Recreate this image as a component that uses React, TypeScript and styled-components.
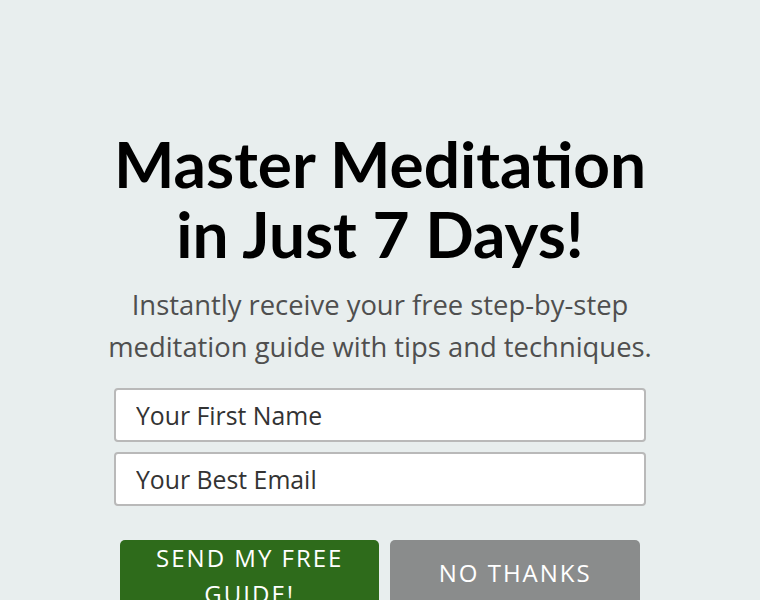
import styled, { createGlobalStyle } from 'styled-components';

var GlobalStyle = createGlobalStyle`
	html, body {
		margin: 0;
		padding: 0;
		background-color: #e8eeee;
	}
	* {
		box-sizing: border-box;
	}
`;

var App = () => {
	return (
		<>
			<GlobalStyle />
			<Page>
				<Wrapper>
					<h1 className='title'>
						Master Meditation
						<br />
						in Just 7 Days!
					</h1>
					<p className='lead'>
						Instantly receive your free step-by-step meditation guide with tips and techniques.
					</p>
					<Form onSubmit={(e) => e.preventDefault()}>
						<Field type='text' placeholder='Your First Name' />
						<Field type='email' placeholder='Your Best Email' />
						<ButtonRow>
							<Button type='submit' tone='green' wide>
								SEND MY FREE GUIDE!
							</Button>
							<Button type='button' tone='grey'>
								NO THANKS
							</Button>
						</ButtonRow>
					</Form>
				</Wrapper>
			</Page>
		</>
	);
};
export default App;

var Page = styled.div`
	min-height: 600px;
	display: flex;
	justify-content: center;
	padding-top: 129px;
`;

var Wrapper = styled.div`
	width: 532px;
	display: flex;
	flex-direction: column;
	align-items: center;

	.title {
		margin: 0;
		font-family: Lato, 'Liberation Sans', sans-serif;
		font-weight: 700;
		font-size: 64px;
		line-height: 70px;
		color: #000;
		text-align: center;
		white-space: nowrap;
	}

	.lead {
		width: 570px;
		margin: 15px 0 20px;
		font-family: 'Open Sans', 'Liberation Sans', sans-serif;
		font-size: 27.4px;
		line-height: 42px;
		color: #4f4f4f;
		text-align: center;
	}
`;

var Form = styled.form`
	width: 100%;
	display: flex;
	flex-direction: column;
	gap: 10px;
`;

var Field = styled.input`
	width: 100%;
	height: 54px;
	padding: 0 20px;
	border: 2px solid #b9b9b9;
	border-radius: 4px;
	background-color: #fff;
	font-family: 'Open Sans', 'Liberation Sans', sans-serif;
	font-size: 24.8px;
	color: #333;
	outline: none;

	&::placeholder {
		color: #333;
		opacity: 1;
	}
`;

var ButtonRow = styled.div`
	display: flex;
	gap: 11px;
	padding: 0 6px;
	margin-top: 24px;
`;

var Button = styled.button<{ tone: 'green' | 'grey'; wide?: boolean }>`
	width: ${(props) => (props.wide ? '260px' : '250px')};
	min-height: 72px;
	padding: ${(props) => (props.wide ? '0 30px' : '0 30px 6px')};
	border: none;
	border-radius: 5px;
	background-color: ${(props) => (props.tone === 'green' ? '#2e6b1b' : '#8a8c8c')};
	font-family: 'Open Sans', 'Liberation Sans', sans-serif;
	font-size: 24px;
	line-height: 36px;
	letter-spacing: 2px;
	color: #fff;
	cursor: pointer;
`;
